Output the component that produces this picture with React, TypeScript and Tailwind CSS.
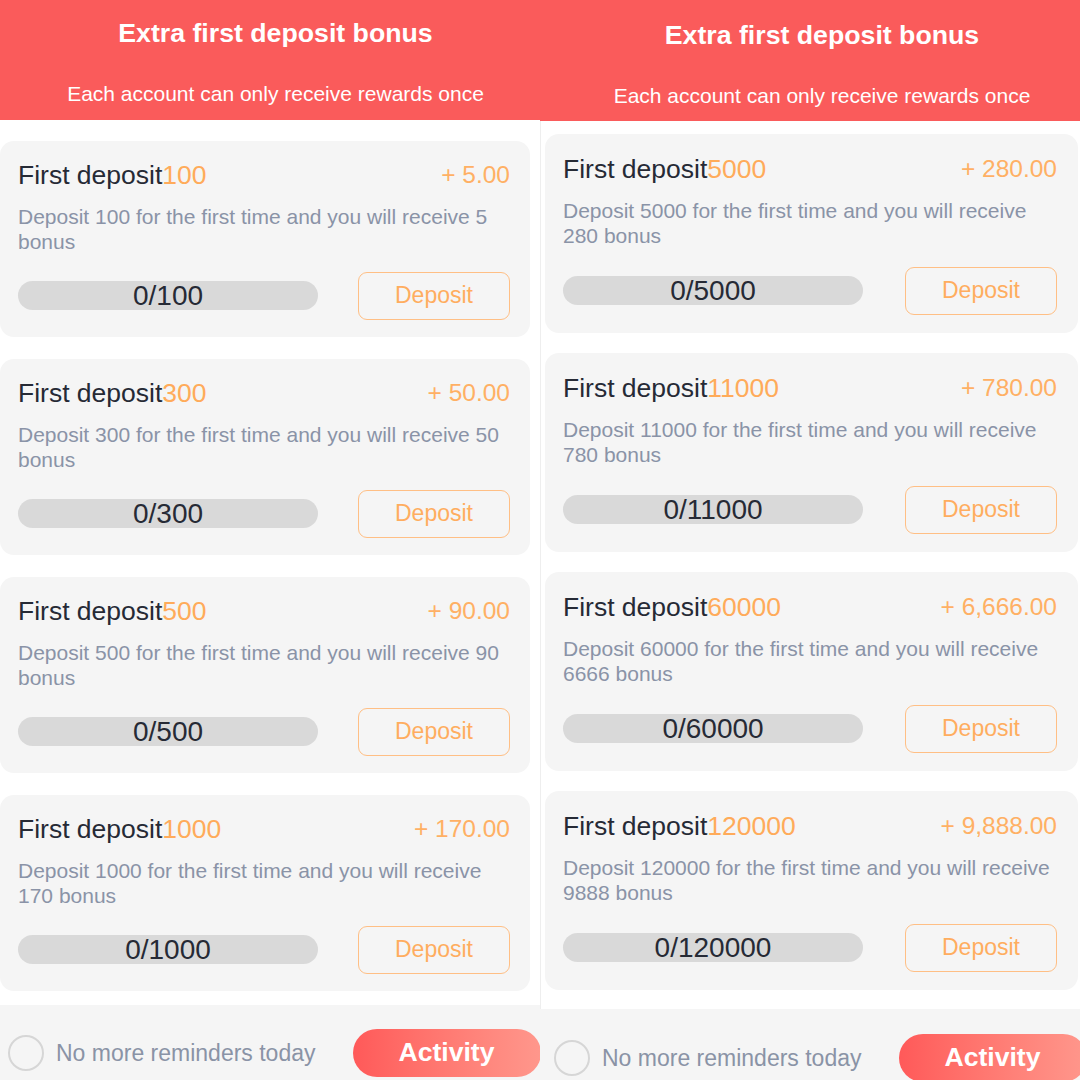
import React from "react";

type Item = { amount: string; bonus: string; plus: string };

const leftItems: Item[] = [
  { amount: "100", bonus: "5", plus: "+ 5.00" },
  { amount: "300", bonus: "50", plus: "+ 50.00" },
  { amount: "500", bonus: "90", plus: "+ 90.00" },
  { amount: "1000", bonus: "170", plus: "+ 170.00" },
];

const rightItems: Item[] = [
  { amount: "5000", bonus: "280", plus: "+ 280.00" },
  { amount: "11000", bonus: "780", plus: "+ 780.00" },
  { amount: "60000", bonus: "6666", plus: "+ 6,666.00" },
  { amount: "120000", bonus: "9888", plus: "+ 9,888.00" },
];

const font = { fontFamily: '"Liberation Sans", Arial, Helvetica, sans-serif' };

function Card({ item, right }: { item: Item; right?: boolean }) {
  return (
    <div
      className={
        right
          ? "flex flex-col w-[533px] h-[199px] shrink-0 rounded-[14px] bg-[#f5f5f5] pl-[18px] pr-[21px] pt-[19px]"
          : "flex flex-col w-[530px] h-[196px] shrink-0 rounded-[14px] bg-[#f5f5f5] pl-[18px] pr-[20px] pt-[18px]"
      }
    >
      <div className="flex items-center justify-between h-[32px]">
        <div className="text-[26.5px] leading-[32px] text-[#262a35] whitespace-nowrap">
          First deposit<span className="text-[#ffab5a]">{item.amount}</span>
        </div>
        <div className="text-[24.5px] leading-[32px] text-[#ffb064] whitespace-nowrap">{item.plus}</div>
      </div>
      <div className="mt-[13px] text-[21px] leading-[25px] text-[#8a93a7]">
        Deposit {item.amount} for the first time and you will receive {item.bonus} bonus
      </div>
      <div
        className={
          right
            ? "mt-auto mb-[19px] h-[47px] flex items-center justify-between"
            : "mt-auto mb-[18px] h-[47px] flex items-center justify-between"
        }
      >
        <div className="w-[300px] h-[29px] rounded-full bg-[#d9d9d9] flex items-center justify-center text-[28px] leading-none text-[#262a35]">
          0/{item.amount}
        </div>
        <div className="w-[152px] h-[48px] rounded-[9px] border border-[#ffbf85] flex items-center justify-center text-[23px] text-[#ffad5f]">
          Deposit
        </div>
      </div>
    </div>
  );
}

function Header({ right }: { right?: boolean }) {
  return (
    <div
      className={
        right
          ? "h-[121px] shrink-0 bg-[#fa5b5b] flex flex-col items-center pl-[24px] text-white"
          : "h-[120px] shrink-0 bg-[#fa5b5b] flex flex-col items-center pl-[11px] text-white"
      }
    >
      <div
        className={
          right
            ? "mt-[19px] text-[26.7px] leading-[32px] font-bold whitespace-nowrap"
            : "mt-[17px] text-[26.7px] leading-[32px] font-bold whitespace-nowrap"
        }
      >
        Extra first deposit bonus
      </div>
      <div className="mt-[32px] text-[21px] leading-[25px] whitespace-nowrap">
        Each account can only receive rewards once
      </div>
    </div>
  );
}

function Footer({ right }: { right?: boolean }) {
  return (
    <div
      className={
        right
          ? "h-[71px] shrink-0 bg-[#f5f5f5] flex items-start pt-[25px] pl-[14px]"
          : "h-[75px] shrink-0 bg-[#f5f5f5] flex items-start pt-[24px] pl-[8px]"
      }
    >
      <div className="h-[48px] flex items-center">
        <div className="w-[36px] h-[36px] rounded-full border-2 border-[#d6d6d6]" />
        <div className="ml-[12px] text-[23px] text-[#8a93a6] whitespace-nowrap">No more reminders today</div>
      </div>
      <div className="ml-[37px] w-[188px] h-[48px] shrink-0 rounded-full bg-gradient-to-r from-[#ff5959] to-[#ff978c] flex items-center justify-center text-white font-bold text-[26.6px]">
        Activity
      </div>
    </div>
  );
}

function LeftPanel() {
  return (
    <div className="w-[540px] h-[1080px] shrink-0 overflow-hidden bg-white flex flex-col">
      <Header />
      <div className="flex flex-col gap-[22px] pt-[21px]">
        {leftItems.map((it) => (
          <Card key={it.amount} item={it} />
        ))}
      </div>
      <div className="h-[14px] shrink-0" />
      <Footer />
    </div>
  );
}

function RightPanel() {
  return (
    <div className="w-[540px] h-[1080px] shrink-0 overflow-hidden bg-white flex flex-col">
      <Header right />
      <div className="flex flex-col gap-[20px] pt-[13px] pl-[4px] border-l border-[#eeeeee]">
        {rightItems.map((it) => (
          <Card key={it.amount} item={it} right />
        ))}
      </div>
      <div className="h-[19px] shrink-0 border-l border-[#eeeeee]" />
      <Footer right />
    </div>
  );
}

export default function App() {
  return (
    <div className="w-[1080px] h-[1080px] overflow-hidden flex bg-white" style={font}>
      <LeftPanel />
      <RightPanel />
    </div>
  );
}
